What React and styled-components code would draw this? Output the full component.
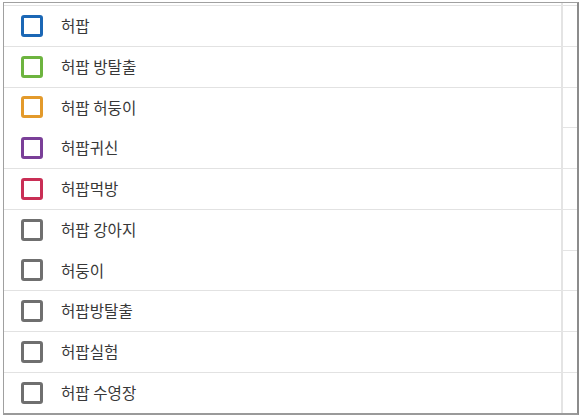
import React from 'react'
import styled, { createGlobalStyle } from 'styled-components'

const GlobalStyle = createGlobalStyle`
  html, body {
    margin: 0;
    padding: 0;
    background: #fff;
  }
  body {
    font-family: "Noto Sans CJK KR", "Noto Sans", sans-serif;
  }
`

const Frame = styled.div`
  margin: 2px 0 0 3px;
  width: 576px;
  height: 413px;
  box-sizing: border-box;
  border: 1px solid #a0a0a0;
  border-right: 2px solid #8c8c8c;
  border-bottom: 2px solid #9a9a9a;
  display: grid;
  grid-template-columns: 1fr 16px;
  overflow: hidden;
`

const Column = styled.div`
  padding-top: 2px;
  ${(p) => p.$side && 'border-left: 2px solid #e4e4e4;'}
`

const List = styled.ul`
  list-style: none;
  margin: 0;
  padding: 0;
  border-top: 1px solid #e2e2e2;
`

const Row = styled.li`
  box-sizing: border-box;
  height: 40.78px;
  display: flex;
  align-items: center;
  padding-left: 17px;
  gap: 18px;
  border-bottom: 1px solid ${(p) => (p.$noLine ? 'transparent' : '#e2e2e2')};
`

const Box = styled.span`
  box-sizing: border-box;
  width: 22px;
  height: 22px;
  border: 3px solid ${(p) => p.$color};
  border-radius: 3px;
  flex-shrink: 0;
`

const Label = styled.span`
  font-size: 15.6px;
  color: #383838;
  line-height: 1;
`

const SideCell = styled.div`
  box-sizing: border-box;
  height: 40.78px;
  border-bottom: 1px solid #e4e4e4;
`

const items = [
  { label: '허팝', color: '#1b67b5' },
  { label: '허팝 방탈출', color: '#6db43f' },
  { label: '허팝 허둥이', color: '#e39a2b', noLine: true },
  { label: '허팝귀신', color: '#7a3f98' },
  { label: '허팝먹방', color: '#c92e55' },
  { label: '허팝 강아지', color: '#6f6f6f', noLine: true },
  { label: '허둥이', color: '#6f6f6f' },
  { label: '허팝방탈출', color: '#6f6f6f' },
  { label: '허팝실험', color: '#6f6f6f' },
  { label: '허팝 수영장', color: '#6f6f6f' },
]

export default function App() {
  return (
    <>
      <GlobalStyle />
      <Frame>
        <Column>
          <List>
            {items.map((it) => (
              <Row key={it.label} $noLine={it.noLine}>
                <Box $color={it.color} />
                <Label>{it.label}</Label>
              </Row>
            ))}
          </List>
        </Column>
        <Column $side>
          <List>
            {items.map((it) => (
              <SideCell key={it.label} />
            ))}
          </List>
        </Column>
      </Frame>
    </>
  )
}
